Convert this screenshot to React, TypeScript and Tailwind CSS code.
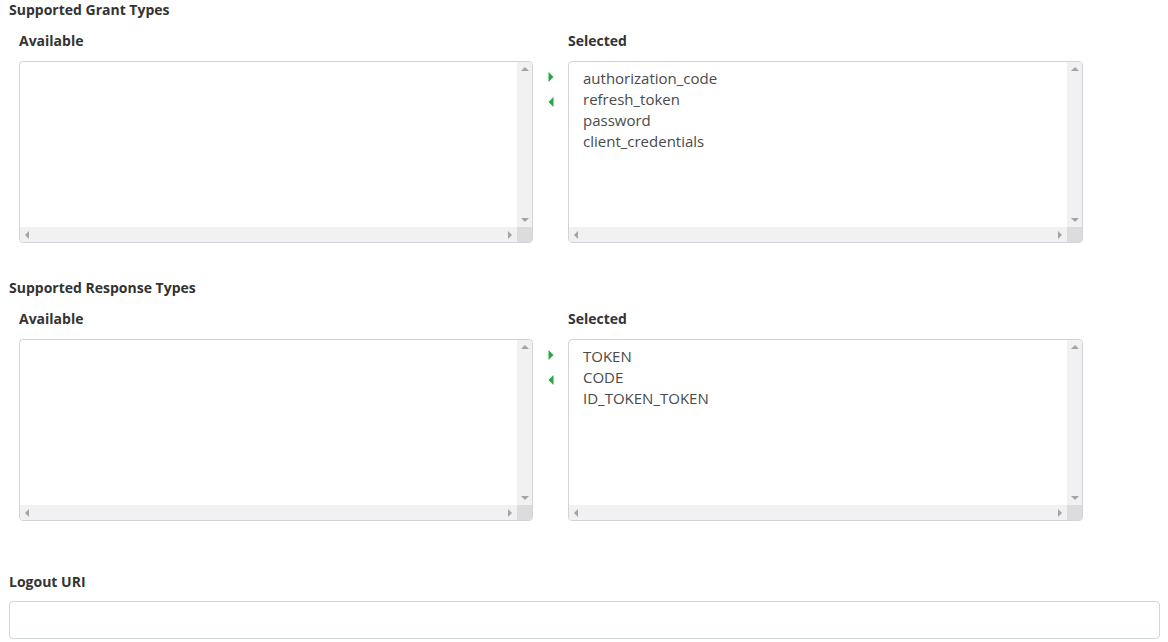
import React from 'react';

const font = { fontFamily: '"Source Sans Pro", "Open Sans", "Liberation Sans", sans-serif' };

const Tri = ({ dir, className }: { dir: 'up' | 'down' | 'left' | 'right'; className?: string }) => {
  const pts: Record<string, string> = {
    up: '0,4 4,0 8,4',
    down: '0,0 8,0 4,4',
    left: '4,0 4,8 0,4',
    right: '0,0 0,8 4,4',
  };
  const vertical = dir === 'up' || dir === 'down';
  return (
    <svg width={vertical ? 8 : 4} height={vertical ? 4 : 8} viewBox={vertical ? '0 0 8 4' : '0 0 4 8'} className={className}>
      <polygon points={pts[dir]} fill="currentColor" />
    </svg>
  );
};

const ListBox = ({ items }: { items: string[] }) => (
  <div className="flex h-[182px] flex-col overflow-hidden rounded-[4px] border border-[#cfd4da] bg-white">
    <div className="flex min-h-0 flex-1">
      <div className="flex-1 px-[14px] pt-[6px] text-[15px] leading-[21px] text-[#4a4a4a]">
        {items.map((item) => (
          <div key={item}>{item}</div>
        ))}
      </div>
      <div className="flex w-[15px] flex-col items-center justify-between bg-[#f1f1f1] py-[5px] text-[#a3a3a3]">
        <Tri dir="up" />
        <Tri dir="down" />
      </div>
    </div>
    <div className="flex h-[15px]">
      <div className="flex flex-1 items-center justify-between bg-[#f1f1f1] px-[5px] text-[#a3a3a3]">
        <Tri dir="left" />
        <Tri dir="right" />
      </div>
      <div className="w-[15px] bg-[#dcdcdc]" />
    </div>
  </div>
);

const DualList = ({ title, selected }: { title: string; selected: string[] }) => (
  <div>
    <div className="text-[14px] font-bold leading-[20px] text-[#333]">{title}</div>
    <div className="mt-[11px] flex pl-[10px]">
      <div className="w-[514px]">
        <div className="text-[14px] font-bold leading-[20px] text-[#333]">Available</div>
        <div className="mt-[10px]">
          <ListBox items={[]} />
        </div>
      </div>
      <div className="flex w-[35px] flex-col items-center pt-[41px] text-[#28a745]">
        <Tri dir="right" className="h-[10px] w-[6px]" />
        <Tri dir="left" className="mt-[15px] h-[10px] w-[6px]" />
      </div>
      <div className="w-[515px]">
        <div className="text-[14px] font-bold leading-[20px] text-[#333]">Selected</div>
        <div className="mt-[10px]">
          <ListBox items={selected} />
        </div>
      </div>
    </div>
  </div>
);

export default function App() {
  return (
    <div style={font} className="h-[642px] w-[1168px] overflow-hidden bg-white pl-[9px] pr-[8px]">
      <DualList
        title="Supported Grant Types"
        selected={['authorization_code', 'refresh_token', 'password', 'client_credentials']}
      />
      <div className="mt-[35px]">
        <DualList title="Supported Response Types" selected={['TOKEN', 'CODE', 'ID_TOKEN_TOKEN']} />
      </div>
      <div className="mt-[51px]">
        <div className="text-[14px] font-bold leading-[20px] text-[#333]">Logout URI</div>
        <input
          type="text"
          className="mt-[9px] h-[38px] w-full rounded-[4px] border border-[#cfd4da] bg-white px-3 text-[15px] outline-none"
        />
      </div>
    </div>
  );
}
